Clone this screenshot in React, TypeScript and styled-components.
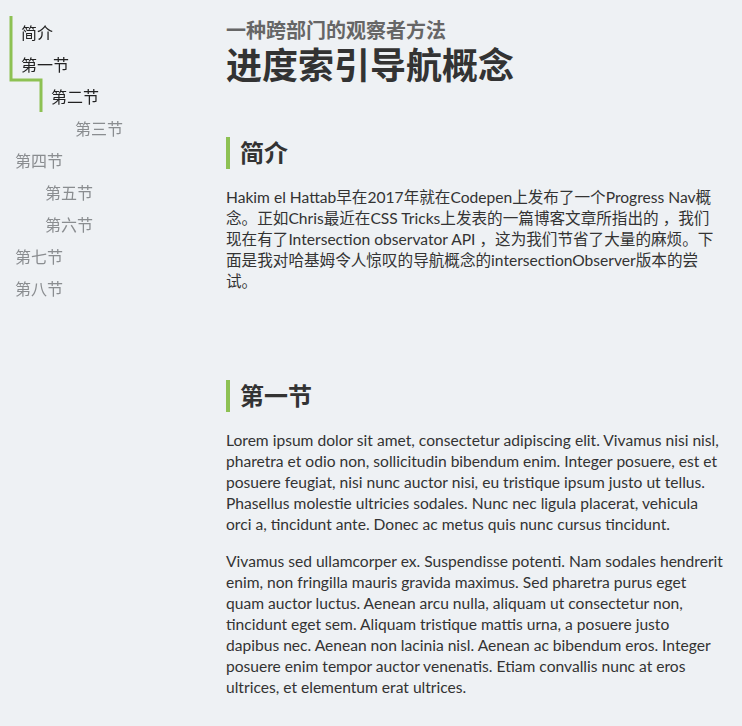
import React from 'react'
import styled, {createGlobalStyle} from 'styled-components'

const GlobalStyle = createGlobalStyle`
  body {
    margin: 0;
    background: #eef1f4;
    color: #333;
    font-family: Lato, "Noto Sans CJK SC", sans-serif;
  }
`

type NavEntry = {id: string, label: string, level: number, active?: boolean}

const navItems: NavEntry[] = [
  {id: 'intro', label: '简介', level: 1, active: true},
  {id: 's1', label: '第一节', level: 1, active: true},
  {id: 's2', label: '第二节', level: 2, active: true},
  {id: 's3', label: '第三节', level: 3},
  {id: 's4', label: '第四节', level: 1},
  {id: 's5', label: '第五节', level: 2},
  {id: 's6', label: '第六节', level: 2},
  {id: 's7', label: '第七节', level: 1},
  {id: 's8', label: '第八节', level: 1},
]

const lorem1 = 'Lorem ipsum dolor sit amet, consectetur adipiscing elit. Vivamus nisi nisl, pharetra et odio non, sollicitudin bibendum enim. Integer posuere, est et posuere feugiat, nisi nunc auctor nisi, eu tristique ipsum justo ut tellus. Phasellus molestie ultricies sodales. Nunc nec ligula placerat, vehicula orci a, tincidunt ante. Donec ac metus quis nunc cursus tincidunt.'
const lorem2 = 'Vivamus sed ullamcorper ex. Suspendisse potenti. Nam sodales hendrerit enim, non fringilla mauris gravida maximus. Sed pharetra purus eget quam auctor luctus. Aenean arcu nulla, aliquam ut consectetur non, tincidunt eget sem. Aliquam tristique mattis urna, a posuere justo dapibus nec. Aenean non lacinia nisl. Aenean ac bibendum eros. Integer posuere enim tempor auctor venenatis. Etiam convallis nunc at eros ultrices, et elementum erat ultrices.'

const ProgressNav: React.FC = () => (
  <Nav>
    <NavList>
      {navItems.map(item => (
        <NavItem key={item.id} $level={item.level} $active={!!item.active}>
          {item.label}
        </NavItem>
      ))}
    </NavList>
    <Track width="60" height="130">
      <path d="M11 16 V80 H41 V112" fill="none" stroke="#8dc153" strokeWidth="3" />
    </Track>
  </Nav>
)

export default function App() {
  return (
    <>
      <GlobalStyle />
      <ProgressNav />
      <Main>
        <Kicker>一种跨部门的观察者方法</Kicker>
        <Title>进度索引导航概念</Title>
        <Section>
          <SectionTitle>简介</SectionTitle>
          <Para>
            Hakim el Hattab早在2017年就在Codepen上发布了一个Progress Nav概念。正如Chris最近在CSS Tricks上发表的一篇博客文章所指出的 ，我们现在有了Intersection observator API ，这为我们节省了大量的麻烦。下面是我对哈基姆令人惊叹的导航概念的intersectionObserver版本的尝试。
          </Para>
        </Section>
        <Section>
          <SectionTitle>第一节</SectionTitle>
          <Para>{lorem1}</Para>
          <Para>{lorem2}</Para>
        </Section>
      </Main>
    </>
  )
}

const Nav = styled.nav`
  position: fixed;
  top: 0;
  left: 0;
  width: 200px;
  padding-top: 16px;
`

const NavList = styled.ul`
  list-style: none;
  margin: 0;
  padding: 0;
`

const NavItem = styled.li<{$level: number, $active: boolean}>`
  padding-left: ${p => 15 + (p.$level - 1) * 30}px;
  height: 32px;
  line-height: 32px;
  font-size: 16px;
  font-family: "Noto Sans CJK SC", sans-serif;
  color: ${p => p.$active ? '#222' : '#8a8d90'};
  transform: translateX(${p => p.$active ? 6 : 0}px);
`

const Track = styled.svg`
  position: absolute;
  top: 0;
  left: 0;
`

const Main = styled.main`
  margin-left: 226px;
  width: 497px;
  padding-top: 18px;
  padding-bottom: 40px;
`

const Kicker = styled.h3`
  margin: 0;
  font-size: 20px;
  line-height: 24px;
  font-weight: 700;
  color: #666;
`

const Title = styled.h1`
  margin: 2px 0 0;
  font-size: 36px;
  line-height: 43px;
  font-weight: 700;
  color: #333;
`

const Section = styled.section`
  padding: 50px 0 22px;
`

const SectionTitle = styled.h2`
  margin: 0 0 18px;
  border-left: 4px solid #8dc153;
  padding-left: 10px;
  font-size: 24px;
  line-height: 32px;
  font-weight: 700;
  color: #333;
`

const Para = styled.p`
  margin: 0 0 16px;
  font-size: 15.6px;
  line-height: 21px;
`
